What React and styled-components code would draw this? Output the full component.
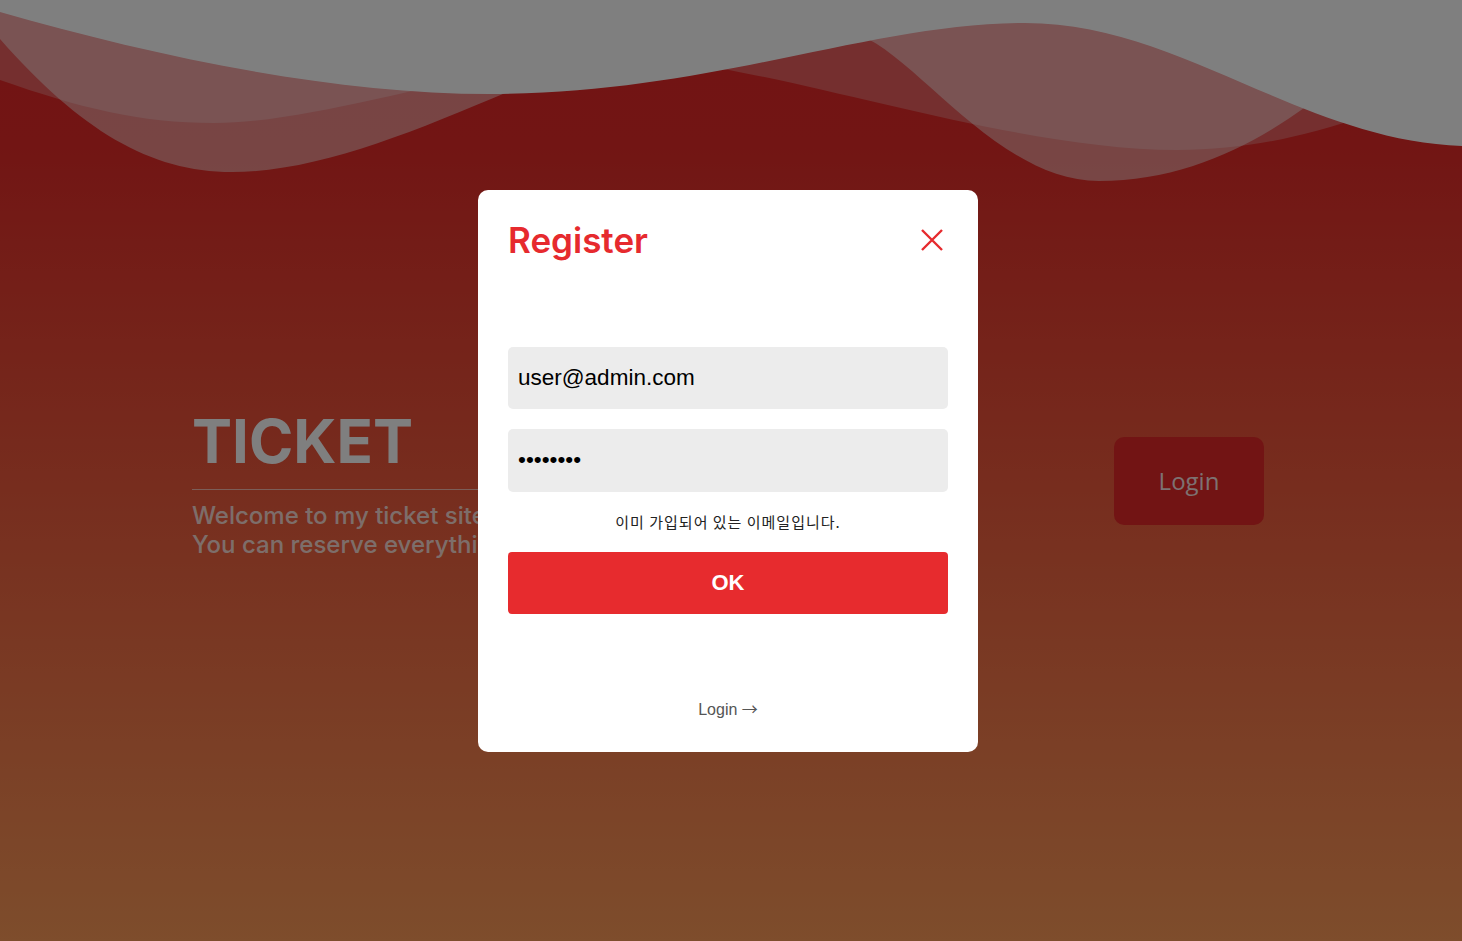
import React from 'react';
import styled, { createGlobalStyle } from 'styled-components';

const GlobalStyle = createGlobalStyle`
  * {
    box-sizing: border-box;
  }

  body {
    margin: 0;
    font-family: "Liberation Sans", Arial, sans-serif;
  }
`;

const Page = styled.div`
  position: relative;
  height: 100vh;
  overflow: hidden;
  background: linear-gradient(180deg, #e42828 0%, #e42a28 15%, #fc9a58 100%);
`;

const Waves = styled.svg`
  position: absolute;
  top: 0;
  left: 0;
  width: 100%;
  height: 200px;
`;

const Hero = styled.main`
  height: 100%;
  display: flex;
  align-items: center;
  justify-content: space-between;
  padding: 20px 198px 0 192px;
`;

const Intro = styled.div`
  width: 480px;
  padding-top: 8px;
`;

const Brand = styled.h1`
  margin: 0;
  font-family: Inter, "Open Sans", sans-serif;
  font-size: 60px;
  line-height: 1;
  font-weight: 700;
  color: #fff;
  padding-bottom: 18px;
  border-bottom: 1px solid rgba(255, 255, 255, 0.6);
`;

const Tagline = styled.p`
  margin: 11px 0 0;
  font-family: Inter, "Open Sans", sans-serif;
  font-size: 24px;
  line-height: 29px;
  font-weight: 500;
  color: rgba(255, 255, 255, 0.8);
  white-space: nowrap;
`;

const HeroButton = styled.button`
  width: 150px;
  height: 88px;
  border: none;
  border-radius: 10px;
  background: #e42828;
  font-family: "Open Sans", sans-serif;
  font-size: 24px;
  color: rgba(255, 255, 255, 0.88);
`;

const Backdrop = styled.div`
  position: fixed;
  inset: 0;
  background: rgba(0, 0, 0, 0.5);
  display: flex;
  align-items: center;
  justify-content: center;
  padding-right: 6px;
`;

const Modal = styled.div`
  width: 500px;
  height: 562px;
  background: #fff;
  border-radius: 10px;
  padding: 20px 30px 32px;
  display: flex;
  flex-direction: column;
`;

const ModalHeader = styled.div`
  height: 60px;
  display: flex;
  align-items: center;
  justify-content: space-between;
  margin-bottom: 77px;
`;

const Title = styled.h2`
  margin: 0;
  font-family: Inter, "Open Sans", sans-serif;
  font-size: 35px;
  font-weight: 600;
  color: #e62a2e;
`;

const CloseButton = styled.button`
  width: 28px;
  height: 28px;
  border: none;
  background: none;
  padding: 0;
  margin-right: 2px;
  display: flex;
  align-items: center;
  justify-content: center;
  cursor: pointer;
`;

const Field = styled.input`
  width: 100%;
  height: ${(p) => p.$h || 62}px;
  border: none;
  border-radius: 5px;
  background: #ececec;
  padding: 0 10px;
  font-family: "Liberation Sans", Arial, sans-serif;
  font-size: 22.5px;
  color: #000;
  outline: none;
  margin-bottom: ${(p) => p.$mb || 0}px;
`;

const Notice = styled.p`
  margin: 20px 0;
  height: 20px;
  text-align: center;
  font-family: "Noto Sans CJK KR", sans-serif;
  font-size: 15px;
  line-height: 20px;
  letter-spacing: 1px;
  color: #222;
`;

const Submit = styled.button`
  width: 100%;
  height: 62px;
  border: none;
  border-radius: 4px;
  background: #e72b2e;
  color: #fff;
  font-family: "Liberation Sans", Arial, sans-serif;
  font-size: 22px;
  font-weight: 700;
`;

const SwitchLink = styled.a`
  margin-top: auto;
  text-align: center;
  font-family: "Liberation Sans", Arial, sans-serif;
  font-size: 16px;
  line-height: 20px;
  color: #555;
  text-decoration: none;
`;

const Arrow = styled.span`
  font-family: "Noto Sans CJK KR", sans-serif;
`;

const App = () => {
  return (
    <>
      <GlobalStyle />
      <Page>
        <Waves viewBox="0 0 1462 200" preserveAspectRatio="none">
          <path
            fill="#fff"
            fillOpacity="0.45"
            d="M0,39 C80,130 150,172 232,172 C330,172 440,120 560,70 C640,25 760,0 860,35 C920,60 1000,181 1099,181 C1200,181 1280,130 1340,80 L1462,0 L0,0 Z"
          />
          <path
            fill="#fff"
            fillOpacity="0.25"
            d="M0,80 C80,108 140,123 214,123 C330,123 480,60 640,60 C760,60 1000,150 1177,150 C1280,150 1360,120 1462,80 L1462,0 L0,0 Z"
          />
          <path
            fill="#fff"
            d="M0,12 C150,55 330,94 490,94 C710,94 870,23 1025,23 C1180,23 1300,140 1462,146 L1462,0 L0,0 Z"
          />
        </Waves>
        <Hero>
          <Intro>
            <Brand>TICKET</Brand>
            <Tagline>
              Welcome to my ticket site
              <br />
              You can reserve everything
            </Tagline>
          </Intro>
          <HeroButton>Login</HeroButton>
        </Hero>
      </Page>
      <Backdrop>
        <Modal>
          <ModalHeader>
            <Title>Register</Title>
            <CloseButton aria-label="close">
              <svg width="22" height="22" viewBox="0 0 22 22">
                <path d="M1 1 L21 21 M21 1 L1 21" stroke="#e62a2e" strokeWidth="2.4" />
              </svg>
            </CloseButton>
          </ModalHeader>
          <Field type="email" defaultValue="user@admin.com" readOnly $mb={20} />
          <Field type="password" defaultValue="12345678" readOnly $h={63} />
          <Notice>이미 가입되어 있는 이메일입니다.</Notice>
          <Submit>OK</Submit>
          <SwitchLink href="#">
            Login <Arrow>→</Arrow>
          </SwitchLink>
        </Modal>
      </Backdrop>
    </>
  );
};

export default App;
